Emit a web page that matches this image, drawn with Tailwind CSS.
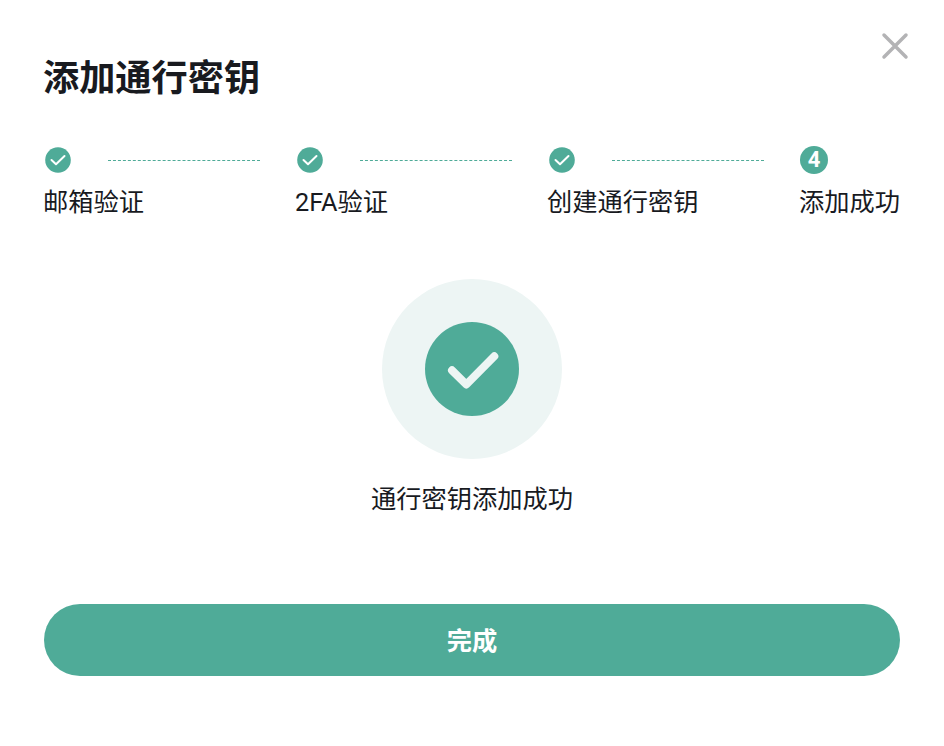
<!DOCTYPE html>
<html lang="zh-CN">
<head>
    <meta charset="UTF-8">
    <meta name="viewport" content="width=device-width, initial-scale=1.0">
    <title>添加通行密钥</title>
    <script src="https://cdn.jsdelivr.net/npm/@tailwindcss/browser@4"></script>
</head>
<body class="bg-white text-[#181a1f] font-['Roboto','Noto_Sans_CJK_SC',sans-serif]">

<div class="relative w-[944px] h-[746px] overflow-hidden px-[44px] pt-[54px]">
    <!-- Close -->
    <button class="absolute left-[880px] top-[31px] w-[30px] h-[30px]">
        <svg width="30" height="30" viewBox="0 0 30 30" fill="none" stroke="#b3b3b5" stroke-width="3.5" stroke-linecap="round"><path d="M4 4L26 26M26 4L4 26"/></svg>
    </button>

    <h1 class="text-[36.2px] leading-[50px] font-bold -ml-px">添加通行密钥</h1>

    <!-- Steps -->
    <div class="flex mt-[42px]">
        <div class="w-[252px]">
            <div class="flex items-center h-7 pl-px">
                <svg width="26" height="26" viewBox="0 0 26 26" fill="none"><circle cx="13" cy="13" r="12.8" fill="#4fab98"/><path d="M6.5 13L11 17.2L19.5 9" stroke="#fff" stroke-width="2" stroke-linecap="round" stroke-linejoin="round"/></svg>
                <div class="ml-[37px] w-[152px] border-t border-dashed border-[#4fab98]"></div>
            </div>
            <div class="mt-[11px] -ml-px text-[25.25px] leading-[36px]">邮箱验证</div>
        </div>
        <div class="w-[252px]">
            <div class="flex items-center h-7 pl-px">
                <svg width="26" height="26" viewBox="0 0 26 26" fill="none"><circle cx="13" cy="13" r="12.8" fill="#4fab98"/><path d="M6.5 13L11 17.2L19.5 9" stroke="#fff" stroke-width="2" stroke-linecap="round" stroke-linejoin="round"/></svg>
                <div class="ml-[37px] w-[152px] border-t border-dashed border-[#4fab98]"></div>
            </div>
            <div class="mt-[11px] -ml-px text-[25.25px] leading-[36px]">2FA验证</div>
        </div>
        <div class="w-[252px]">
            <div class="flex items-center h-7 pl-px">
                <svg width="26" height="26" viewBox="0 0 26 26" fill="none"><circle cx="13" cy="13" r="12.8" fill="#4fab98"/><path d="M6.5 13L11 17.2L19.5 9" stroke="#fff" stroke-width="2" stroke-linecap="round" stroke-linejoin="round"/></svg>
                <div class="ml-[37px] w-[152px] border-t border-dashed border-[#4fab98]"></div>
            </div>
            <div class="mt-[11px] -ml-px text-[25.25px] leading-[36px]">创建通行密钥</div>
        </div>
        <div class="w-[100px]">
            <div class="flex items-center justify-start h-7">
                <div class="w-7 h-7 rounded-full bg-[#4fab98] text-white text-[22px] font-bold flex items-center justify-center leading-none">4</div>
            </div>
            <div class="mt-[11px] -ml-px text-[25.25px] leading-[36px] whitespace-nowrap">添加成功</div>
        </div>
    </div>

    <!-- Success -->
    <div class="flex flex-col items-center mt-[58px]">
        <div class="w-[180px] h-[180px] rounded-full bg-[#edf5f4] flex items-center justify-center">
            <div class="w-[94px] h-[94px] rounded-full bg-[#4fab98] flex items-center justify-center">
                <svg width="94" height="94" viewBox="0 0 94 94" fill="none"><path d="M27 48.3L41.3 62.5L69.3 34.3" stroke="#edf5f4" stroke-width="8" stroke-linecap="round" stroke-linejoin="round"/></svg>
            </div>
        </div>
        <p class="mt-[23px] text-[25.25px] leading-[36px]">通行密钥添加成功</p>
    </div>

    <button class="mt-[86px] w-full h-[72px] pt-[3px] rounded-full bg-[#4fab98] text-white text-[25.25px] font-bold">完成</button>
</div>

</body>
</html>
